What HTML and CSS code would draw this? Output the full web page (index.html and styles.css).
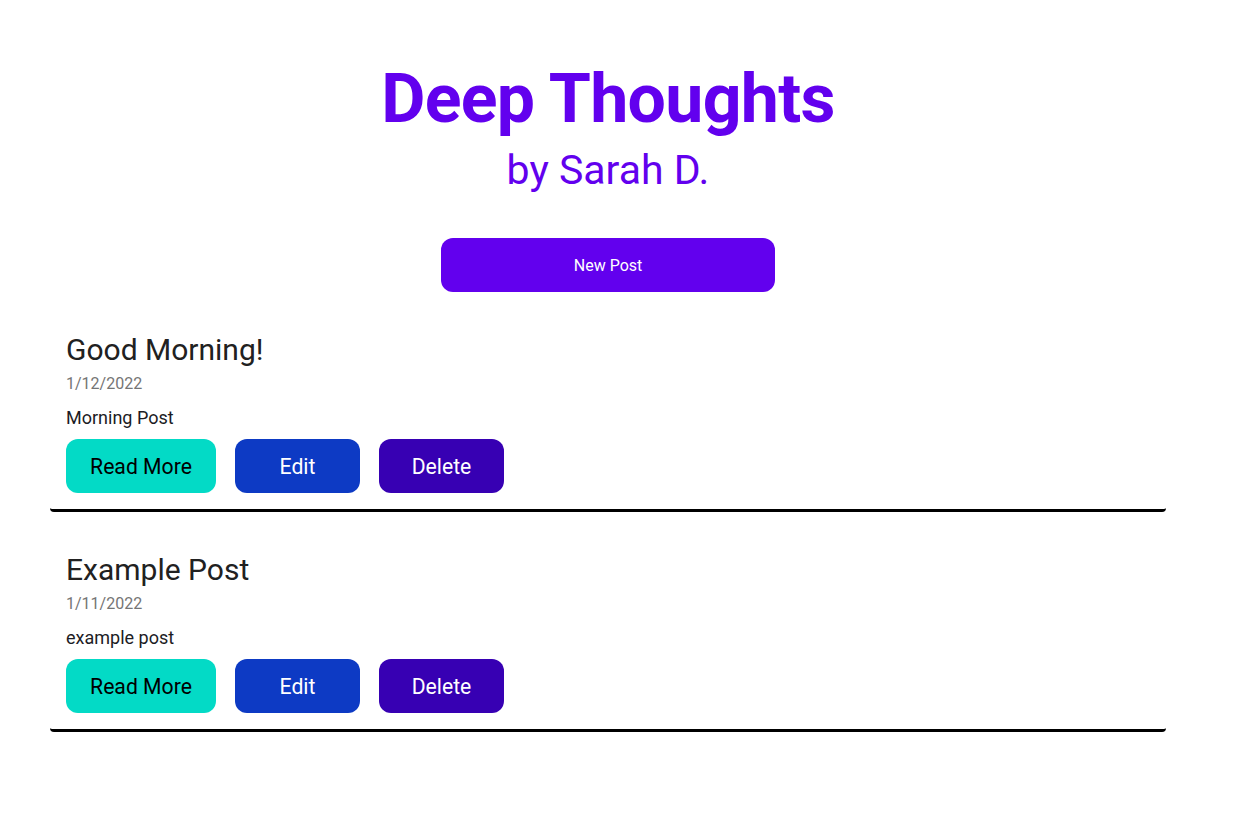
FILE: index.html
```html
<!DOCTYPE html>
<html lang="en">
<head>
<meta charset="utf-8">
<title>Deep Thoughts</title>
<link rel="stylesheet" href="styles.css">
</head>
<body>
<main class="container">
  <header class="header">
    <h1 class="title">Deep Thoughts</h1>
    <h2 class="subtitle">by Sarah D.</h2>
    <button class="btn btn-new">New Post</button>
  </header>
  <article class="post">
    <h3 class="post-title">Good Morning!</h3>
    <div class="post-date">1/12/2022</div>
    <p class="post-body">Morning Post</p>
    <div class="actions">
      <button class="btn btn-read">Read More</button>
      <button class="btn btn-edit">Edit</button>
      <button class="btn btn-delete">Delete</button>
    </div>
  </article>
  <article class="post">
    <h3 class="post-title">Example Post</h3>
    <div class="post-date">1/11/2022</div>
    <p class="post-body">example post</p>
    <div class="actions">
      <button class="btn btn-read">Read More</button>
      <button class="btn btn-edit">Edit</button>
      <button class="btn btn-delete">Delete</button>
    </div>
  </article>
</main>
</body>
</html>
```
FILE: styles.css
```css
* { box-sizing: border-box; }
html, body { margin: 0; padding: 0; background: #fff; }
body { font-family: Roboto, "Noto Sans", "Liberation Sans", sans-serif; }
.container {
  width: 1116px;
  margin-left: 50px;
  padding-top: 57px;
  display: flex;
  flex-direction: column;
  gap: 25px;
}
.header {
  display: flex;
  flex-direction: column;
  align-items: center;
}
.title {
  margin: 0;
  font-size: 68px;
  font-weight: 700;
  line-height: 84px;
  letter-spacing: -0.7px;
  color: #6200ee;
}
.subtitle {
  margin: 6px 0 0;
  font-size: 41px;
  font-weight: 400;
  line-height: 47px;
  color: #6200ee;
}
.btn {
  font-family: Roboto, "Noto Sans", "Liberation Sans", sans-serif;
  border: none;
  border-radius: 12px;
  height: 54px;
  padding: 0;
  cursor: pointer;
}
.btn-new {
  margin-top: 44px;
  width: 334px;
  background: #6200ee;
  color: #fff;
  font-size: 16px;
}
.post {
  padding: 16px;
  border-bottom: 3px solid #000;
  border-radius: 4px;
}
.post-title {
  margin: 0;
  font-size: 30px;
  font-weight: 400;
  line-height: 33px;
  color: #212121;
}
.post-date {
  margin-top: 8px;
  font-size: 16px;
  line-height: 19px;
  color: #757575;
}
.post-body {
  margin: 15px 0 0;
  font-size: 18px;
  line-height: 19px;
  color: #1c1c24;
}
.actions {
  margin-top: 12px;
  display: flex;
  gap: 19px;
}
.btn-read, .btn-edit, .btn-delete { font-size: 21.2px; width: 125px; }
.btn-read { width: 150px; background: #03dac6; color: #000; }
.btn-edit { background: #0d3ac4; color: #fff; }
.btn-delete { background: #3700b3; color: #fff; }
```
